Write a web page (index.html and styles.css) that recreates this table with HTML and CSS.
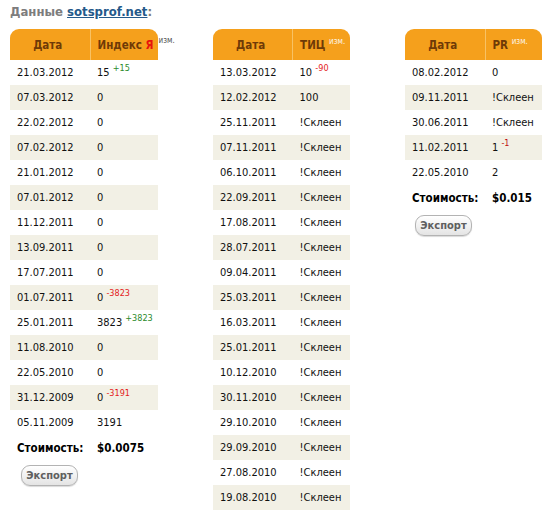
FILE: index.html
```html
<!DOCTYPE html>
<html lang="ru">
<head>
<meta charset="utf-8">
<title>Данные sotsprof.net</title>
<link rel="stylesheet" href="styles.css">
</head>
<body>
<h1 class="title">Данные <a href="#" class="site">sotsprof.net</a>:</h1>
<div class="tables">
  <div class="block">
    <table class="stats t-wide">
      <colgroup><col class="c-date"><col class="c-val1"></colgroup>
      <thead>
        <tr><th class="h-date">Дата</th><th class="h-val">Индекс <span class="ya">Я</span><sup class="izm izm-out">изм.</sup></th></tr>
      </thead>
      <tbody>
        <tr><td>21.03.2012</td><td>15 <sup class="up">+15</sup></td></tr>
        <tr class="alt"><td>07.03.2012</td><td>0</td></tr>
        <tr><td>22.02.2012</td><td>0</td></tr>
        <tr class="alt"><td>07.02.2012</td><td>0</td></tr>
        <tr><td>21.01.2012</td><td>0</td></tr>
        <tr class="alt"><td>07.01.2012</td><td>0</td></tr>
        <tr><td>11.12.2011</td><td>0</td></tr>
        <tr class="alt"><td>13.09.2011</td><td>0</td></tr>
        <tr><td>17.07.2011</td><td>0</td></tr>
        <tr class="alt"><td>01.07.2011</td><td>0 <sup class="down">-3823</sup></td></tr>
        <tr><td>25.01.2011</td><td>3823 <sup class="up">+3823</sup></td></tr>
        <tr class="alt"><td>11.08.2010</td><td>0</td></tr>
        <tr><td>22.05.2010</td><td>0</td></tr>
        <tr class="alt"><td>31.12.2009</td><td>0 <sup class="down">-3191</sup></td></tr>
        <tr><td>05.11.2009</td><td>3191</td></tr>
        <tr class="cost"><td>Стоимость:</td><td>$0.0075</td></tr>
      </tbody>
    </table>
    <button class="export">Экспорт</button>
  </div>

  <div class="block">
    <table class="stats t-narrow">
      <colgroup><col class="c-date2"><col class="c-val2"></colgroup>
      <thead>
        <tr><th class="h-date">Дата</th><th class="h-val">ТИЦ <sup class="izm">изм.</sup></th></tr>
      </thead>
      <tbody>
        <tr><td>13.03.2012</td><td>10 <sup class="down">-90</sup></td></tr>
        <tr class="alt"><td>12.02.2012</td><td>100</td></tr>
        <tr><td>25.11.2011</td><td>!Склеен</td></tr>
        <tr class="alt"><td>07.11.2011</td><td>!Склеен</td></tr>
        <tr><td>06.10.2011</td><td>!Склеен</td></tr>
        <tr class="alt"><td>22.09.2011</td><td>!Склеен</td></tr>
        <tr><td>17.08.2011</td><td>!Склеен</td></tr>
        <tr class="alt"><td>28.07.2011</td><td>!Склеен</td></tr>
        <tr><td>09.04.2011</td><td>!Склеен</td></tr>
        <tr class="alt"><td>25.03.2011</td><td>!Склеен</td></tr>
        <tr><td>16.03.2011</td><td>!Склеен</td></tr>
        <tr class="alt"><td>25.01.2011</td><td>!Склеен</td></tr>
        <tr><td>10.12.2010</td><td>!Склеен</td></tr>
        <tr class="alt"><td>30.11.2010</td><td>!Склеен</td></tr>
        <tr><td>29.10.2010</td><td>!Склеен</td></tr>
        <tr class="alt"><td>29.09.2010</td><td>!Склеен</td></tr>
        <tr><td>27.08.2010</td><td>!Склеен</td></tr>
        <tr class="alt"><td>19.08.2010</td><td>!Склеен</td></tr>
      </tbody>
    </table>
  </div>

  <div class="block">
    <table class="stats t-narrow">
      <colgroup><col class="c-date"><col class="c-val2"></colgroup>
      <thead>
        <tr><th class="h-date">Дата</th><th class="h-val">PR <sup class="izm">изм.</sup></th></tr>
      </thead>
      <tbody>
        <tr><td>08.02.2012</td><td>0</td></tr>
        <tr class="alt"><td>09.11.2011</td><td>!Склеен</td></tr>
        <tr><td>30.06.2011</td><td>!Склеен</td></tr>
        <tr class="alt"><td>11.02.2011</td><td>1 <sup class="down dark">-1</sup></td></tr>
        <tr><td>22.05.2010</td><td>2</td></tr>
        <tr class="cost"><td>Стоимость:</td><td>$0.015</td></tr>
      </tbody>
    </table>
    <button class="export export-r">Экспорт</button>
  </div>
</div>
</body>
</html>
```

FILE: styles.css
```css
html, body {
  margin: 0;
  padding: 0;
  background: #ffffff;
}

body {
  padding: 4px 10px 0 10px;
  font-family: "DejaVu Sans Condensed", "DejaVu Sans", Tahoma, sans-serif;
  font-size: 11px;
  color: #111111;
}

.title {
  margin: 0 0 9px 0;
  font-size: 13px;
  line-height: 16px;
  font-weight: bold;
  color: #7d7d7d;
}

.site {
  color: #24598a;
  text-decoration: underline;
}

.tables {
  display: flex;
  align-items: flex-start;
  gap: 55px;
}

.block {
  display: flex;
  flex-direction: column;
  align-items: flex-start;
}

.stats {
  border-collapse: collapse;
  border-spacing: 0;
  table-layout: fixed;
}

.t-wide { width: 148px; }
.t-narrow { width: 137px; }

.c-date { width: 80px; }
.c-date2 { width: 79px; }
.c-val1 { width: 68px; }
.c-val2 { width: 57px; }

.stats th {
  height: 31px;
  padding: 0;
  background: #f5a01c;
  color: #6f3a07;
  font-size: 11.5px;
  font-weight: bold;
  white-space: nowrap;
  vertical-align: middle;
}

.stats th.h-date {
  text-align: center;
  border-top-left-radius: 9px;
  padding-right: 4px;
}

.stats th.h-val {
  text-align: left;
  padding-left: 7px;
  border-left: 1px solid #f8c264;
  border-top-right-radius: 9px;
  position: relative;
}

.ya {
  color: #e8140b;
}

.izm {
  font-size: 8px;
  font-weight: normal;
  color: #fbf3e4;
  vertical-align: 5px;
  line-height: 0;
}

.izm-out {
  position: absolute;
  left: 68px;
  top: 8px;
  color: #555555;
  vertical-align: baseline;
  line-height: 1;
}

.stats td {
  height: 25px;
  padding: 0 0 0 7px;
  vertical-align: middle;
  white-space: nowrap;
  line-height: 14px;
}

.stats tr.alt td {
  background: #f2f0e5;
}

.stats tr.cost td {
  font-weight: bold;
  font-size: 11.5px;
  color: #000000;
}

sup.up,
sup.down {
  font-size: 9px;
  line-height: 0;
  vertical-align: 5px;
}

.up { color: #2b8a2b; }
.down { color: #e41b1b; }
.down.dark { color: #c01010; }

.export {
  margin: 5px 0 0 11px;
  width: 57px;
  height: 21px;
  padding: 0;
  border: 1px solid #b3b3b3;
  border-radius: 9px;
  background: linear-gradient(#ffffff, #e4e4e4);
  box-shadow: 0 1px 1px rgba(0, 0, 0, 0.15);
  font-family: "DejaVu Sans Condensed", "DejaVu Sans", Tahoma, sans-serif;
  font-size: 11px;
  font-weight: bold;
  color: #5f5f5f;
}

.export-r {
  margin-left: 10px;
}
```
